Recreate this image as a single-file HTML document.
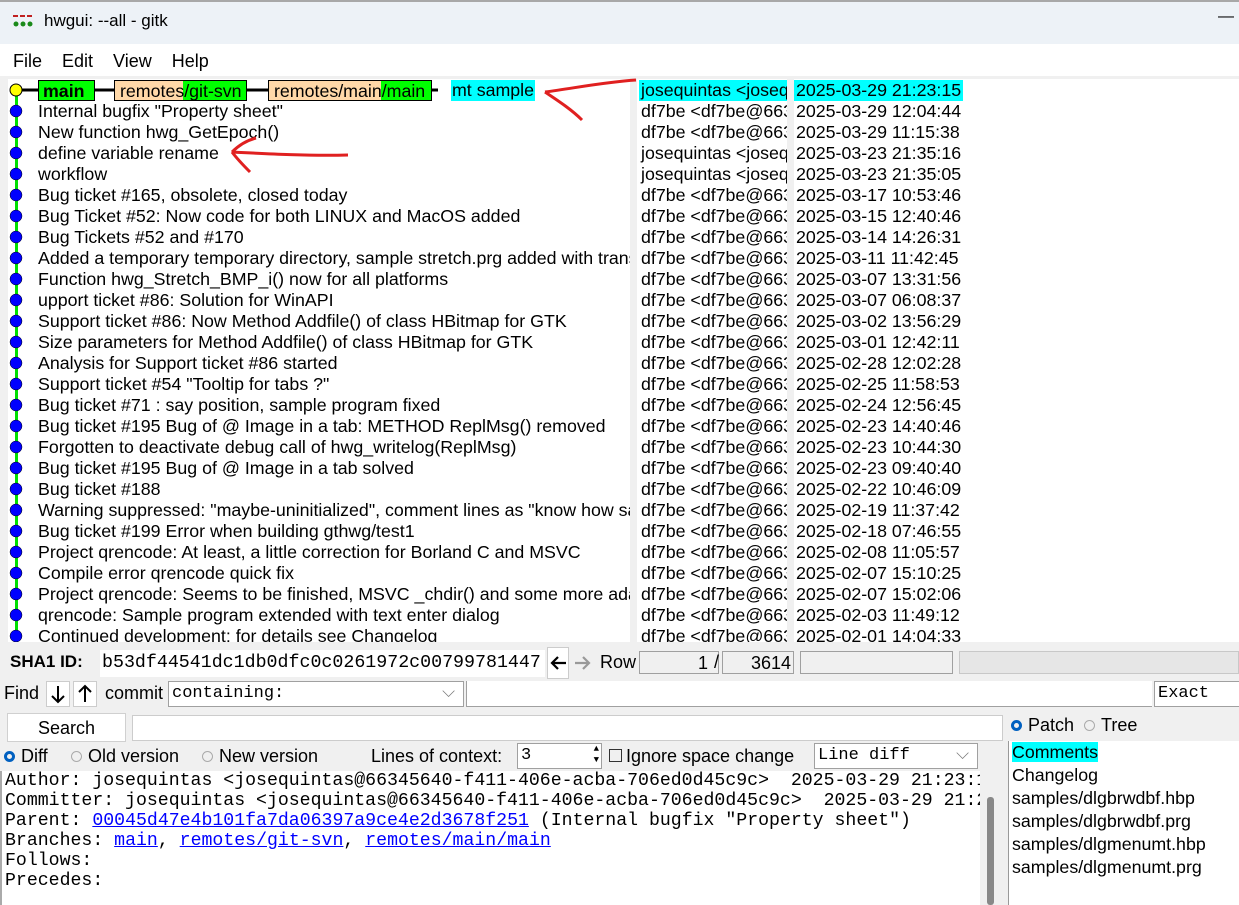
<!DOCTYPE html>
<html><head><meta charset="utf-8"><style>
body{margin:0;width:1239px;height:905px;overflow:hidden;background:#f0f0f0;font-family:"Liberation Sans",sans-serif;position:relative;font-size:18px}
.a{position:absolute;white-space:nowrap}
.r{position:absolute;left:0;height:21px;line-height:21px;font-size:17.8px;white-space:nowrap}
.mono{font-family:"Liberation Mono",monospace}
.box{position:absolute;background:#fff;border:1px solid #a0a0a0;box-sizing:border-box}
a{color:#00f;text-decoration:underline}
.rad{display:inline-block;width:11px;height:11px;border-radius:50%;border:1px solid #aaa;box-sizing:border-box;vertical-align:0;margin-right:6px}
.on{border:3px solid #0060c0}
</style></head><body>
<div class="a" style="left:0;top:0;width:1239px;height:44px;background:#edf2f7;border-top:2px solid #a8a8a8;box-sizing:border-box"></div>
<svg class="a" style="left:13px;top:15px" width="22" height="14"><g fill="#c02020"><rect x="0" y="0" width="5" height="2"/><rect x="7" y="0" width="5" height="2"/><rect x="14" y="0" width="5" height="2"/></g><g fill="#1a8a1a"><circle cx="3" cy="9" r="2.5"/><circle cx="10" cy="9" r="2.5"/><circle cx="17" cy="9" r="2.5"/></g></svg>
<div class="a" style="left:44px;top:11px;font-size:17px">hwgui: --all - gitk</div>
<div class="a" style="left:1218px;top:8px;font-size:16px">—</div>
<div class="a" style="left:0;top:44px;width:1239px;height:32px;background:#fff"></div>
<div class="a" style="left:13px;top:51px;font-size:18px">File&nbsp;&nbsp;&nbsp;&nbsp;Edit&nbsp;&nbsp;&nbsp;&nbsp;View&nbsp;&nbsp;&nbsp;&nbsp;Help</div>

<div class="a" style="left:8px;top:79px;width:622px;height:563px;background:#fff;overflow:hidden">
<div class="a" style="left:7px;top:11px;width:3px;height:560px;background:#00e000"></div>
<div id="g"></div>
</div>
<div class="a" style="left:637px;top:79px;width:150px;height:563px;background:#fff;overflow:hidden" id="au"></div>
<div class="a" style="left:794px;top:79px;width:445px;height:563px;background:#fff;overflow:hidden" id="dt"></div>

<div class="a" style="left:10px;top:652px;font-size:17px;font-weight:bold">SHA1 ID:</div>
<div class="box mono" style="left:100px;top:650px;width:445px;height:27px;border:none;font-size:18.3px;line-height:27px;padding-left:2px">b53df44541dc1db0dfc0c0261972c00799781447</div>
<div class="box" style="left:547px;top:647px;width:22px;height:32px;border-color:#ccc"></div>
<svg class="a" style="left:549px;top:653px" width="46" height="20"><path d="M17 10H3M9 4L3 10L9 16" stroke="#000" stroke-width="2.2" fill="none"/><path d="M26 10H40M34 4L40 10L34 16" stroke="#999" stroke-width="2.2" fill="none"/></svg>
<div class="a" style="left:600px;top:652px;font-size:18px">Row</div>
<div class="box" style="left:639px;top:651px;width:80px;height:23px;background:#f0f0f0;text-align:right;font-size:18px;line-height:22px;padding-right:10px">1</div>
<div class="a" style="left:714px;top:652px;font-size:18px">/</div>
<div class="box" style="left:722px;top:651px;width:72px;height:23px;background:#f0f0f0;text-align:right;font-size:18px;line-height:22px;padding-right:2px">3614</div>
<div class="box" style="left:800px;top:651px;width:153px;height:23px;background:#f0f0f0"></div>
<div class="box" style="left:959px;top:651px;width:280px;height:23px;background:#e6e6e6;border-color:#c8c8c8"></div>

<div class="a" style="left:4px;top:683px;font-size:18px">Find</div>
<div class="box" style="left:46px;top:681px;width:24px;height:26px;border-color:#ccc"></div>
<div class="box" style="left:73px;top:681px;width:24px;height:26px;border-color:#ccc"></div>
<svg class="a" style="left:46px;top:681px" width="52" height="26"><path d="M12 5V21M6 15L12 21L18 15" stroke="#000" stroke-width="2" fill="none"/><path d="M39 21V5M33 11L39 5L45 11" stroke="#000" stroke-width="2" fill="none"/></svg>
<div class="a" style="left:105px;top:683px;font-size:18px">commit</div>
<div class="box mono" style="left:168px;top:681px;width:296px;height:26px;font-size:17px;line-height:24px;padding-left:3px">containing:<span style="position:absolute;right:8px;color:#777">⌵</span></div>
<div class="box" style="left:466px;top:681px;width:686px;height:26px;border-width:0 0 1px 1px"></div>
<div class="box mono" style="left:1154px;top:681px;width:90px;height:26px;font-size:17px;line-height:24px;padding-left:3px">Exact</div>

<div class="box" style="left:7px;top:713px;width:119px;height:29px;border-color:#d0d0d0;text-align:center;font-size:18px;line-height:28px">Search</div>
<div class="box" style="left:132px;top:715px;width:871px;height:26px;border-color:#ccc"></div>
<div class="a" style="left:1011px;top:715px;font-size:18px"><span class="rad on"></span>Patch&nbsp;&nbsp;<span class="rad"></span>Tree</div>

<div class="a" style="left:4px;top:746px;font-size:18px"><span class="rad on"></span>Diff</div>
<div class="a" style="left:71px;top:746px;font-size:18px"><span class="rad"></span>Old version</div>
<div class="a" style="left:202px;top:746px;font-size:18px"><span class="rad"></span>New version</div>
<div class="a" style="left:371px;top:746px;font-size:18px">Lines of context:</div>
<div class="box mono" style="left:517px;top:743px;width:85px;height:26px;font-size:17px;line-height:24px;padding-left:3px">3<span style="position:absolute;right:2px;top:0;font-size:9px;line-height:11px">▲<br>▼</span></div>
<div class="a" style="left:609px;top:746px;font-size:18px"><span style="display:inline-block;width:11px;height:11px;border:1px solid #333;vertical-align:0;margin-right:4px"></span>Ignore space change</div>
<div class="box mono" style="left:814px;top:743px;width:164px;height:26px;font-size:17px;line-height:24px;padding-left:3px">Line diff<span style="position:absolute;right:8px;color:#777">⌵</span></div>

<div class="a mono" style="left:0;top:771px;width:980px;height:134px;background:#fff;border-left:2px solid #aaa;font-size:18.2px;line-height:20px;padding-left:3px;box-sizing:border-box;overflow:hidden;white-space:pre">Author: josequintas &lt;josequintas@66345640-f411-406e-acba-706ed0d45c9c&gt;  2025-03-29 21:23:15
Committer: josequintas &lt;josequintas@66345640-f411-406e-acba-706ed0d45c9c&gt;  2025-03-29 21:23:15
Parent: <a>00045d47e4b101fa7da06397a9ce4e2d3678f251</a> (Internal bugfix "Property sheet")
Branches: <a>main</a>, <a>remotes/git-svn</a>, <a>remotes/main/main</a>
Follows:
Precedes:</div>
<div class="a" style="left:987px;top:797px;width:7px;height:108px;background:#888;border-radius:3px"></div>
<div class="a" style="left:1008px;top:741px;width:231px;height:164px;background:#fff;border-left:1px solid #999;font-size:17.8px;line-height:23px;padding-left:3px;box-sizing:border-box">
<span style="background:#0ff">Comments</span><br>Changelog<br>samples/dlgbrwdbf.hbp<br>samples/dlgbrwdbf.prg<br>samples/dlgmenumt.hbp<br>samples/dlgmenumt.prg</div>

<svg class="a" style="left:0;top:0" width="1239" height="905">
<path d="M545 92 C575 88 605 82 636 80" stroke="#e02020" stroke-width="3" fill="none"/>
<path d="M545 92 C560 102 572 110 582 120" stroke="#e02020" stroke-width="3" fill="none"/>
<path d="M232 152 C270 154 310 156 348 155" stroke="#e02020" stroke-width="3" fill="none"/>
<path d="M232 152 C240 144 248 140 256 138 M232 152 C238 160 244 166 250 172" stroke="#e02020" stroke-width="3" fill="none"/>
</svg>

<script>
var c=[["Internal bugfix \"Property sheet\"","df7be","2025-03-29 12:04:44"],["New function hwg_GetEpoch()","df7be","2025-03-29 11:15:38"],["define variable rename","jq","2025-03-23 21:35:16"],["workflow","jq","2025-03-23 21:35:05"],["Bug ticket #165, obsolete, closed today","df7be","2025-03-17 10:53:46"],["Bug Ticket #52: Now code for both LINUX and MacOS added","df7be","2025-03-15 12:40:46"],["Bug Tickets #52 and #170","df7be","2025-03-14 14:26:31"],["Added a temporary temporary directory, sample stretch.prg added with transparency","df7be","2025-03-11 11:42:45"],["Function hwg_Stretch_BMP_i() now for all platforms","df7be","2025-03-07 13:31:56"],["upport ticket #86: Solution for WinAPI","df7be","2025-03-07 06:08:37"],["Support ticket #86: Now Method Addfile() of class HBitmap for GTK","df7be","2025-03-02 13:56:29"],["Size parameters for Method Addfile() of class HBitmap for GTK","df7be","2025-03-01 12:42:11"],["Analysis for Support ticket #86 started","df7be","2025-02-28 12:02:28"],["Support ticket #54 \"Tooltip for tabs ?\"","df7be","2025-02-25 11:58:53"],["Bug ticket #71 : say position, sample program fixed","df7be","2025-02-24 12:56:45"],["Bug ticket #195 Bug of @ Image in a tab: METHOD ReplMsg() removed","df7be","2025-02-23 14:40:46"],["Forgotten to deactivate debug call of hwg_writelog(ReplMsg)","df7be","2025-02-23 10:44:30"],["Bug ticket #195 Bug of @ Image in a tab solved","df7be","2025-02-23 09:40:40"],["Bug ticket #188","df7be","2025-02-22 10:46:09"],["Warning suppressed: \"maybe-uninitialized\", comment lines as \"know how safe\"","df7be","2025-02-19 11:37:42"],["Bug ticket #199 Error when building gthwg/test1","df7be","2025-02-18 07:46:55"],["Project qrencode: At least, a little correction for Borland C and MSVC","df7be","2025-02-08 11:05:57"],["Compile error qrencode quick fix","df7be","2025-02-07 15:10:25"],["Project qrencode: Seems to be finished, MSVC _chdir() and some more adaptions","df7be","2025-02-07 15:02:06"],["qrencode: Sample program extended with text enter dialog","df7be","2025-02-03 11:49:12"],["Continued development: for details see Changelog","df7be","2025-02-01 14:04:33"]];
var g='',au='',dt='';
g+='<svg class="a" style="left:0;top:0" width="622" height="563"><circle cx="8" cy="11" r="6" fill="#ff0" stroke="#000"/><line x1="14" y1="11" x2="430" y2="11" stroke="#000" stroke-width="3"/>';
for(var i=0;i<c.length;i++)g+='<circle cx="8" cy="'+(32+21*i)+'" r="6" fill="#00f" stroke="#000" stroke-width="0.5"/>';
g+='</svg>';
g+='<div class="r" style="left:30px;top:1px;height:21px;line-height:20px"><span class="a" style="left:0;top:0;width:57px;height:21px;background:#0f0;border:1px solid #000;box-sizing:border-box;font-weight:bold;padding-left:4px">main</span><span class="a" style="left:76px;top:0;width:133px;height:21px;background:linear-gradient(90deg,#ffd8a8 0 68px,#0f0 68px);border:1px solid #000;box-sizing:border-box;padding-left:5px">remotes/git-svn</span><span class="a" style="left:230px;top:0;width:164px;height:21px;background:linear-gradient(90deg,#ffd8a8 0 112px,#0f0 112px);border:1px solid #000;box-sizing:border-box;padding-left:5px">remotes/main/main</span><span class="a" style="left:413px;top:0;background:#0ff;padding:0 1px;height:21px">mt sample</span></div>';
for(var i=0;i<c.length;i++){var y=22+21*i;g+='<div class="r" style="left:30px;top:'+y+'px">'+c[i][0]+'</div>';
au+='<div class="r" style="left:4px;top:'+y+'px">'+(c[i][1]=='jq'?'josequintas &lt;josequintas':'df7be &lt;df7be@66345640')+'</div>';
dt+='<div class="r" style="left:2px;top:'+y+'px">'+c[i][2]+'</div>';}
au='<div class="r" style="left:2px;top:1px;background:#0ff;width:146px;padding-left:2px;overflow:hidden">josequintas &lt;josequintas</div>'+au;
dt='<div class="r" style="left:0;top:1px;background:#0ff;padding:0 2px">2025-03-29 21:23:15</div>'+dt;
document.getElementById('g').innerHTML=g;document.getElementById('au').innerHTML=au;document.getElementById('dt').innerHTML=dt;
</script>
</body></html>
